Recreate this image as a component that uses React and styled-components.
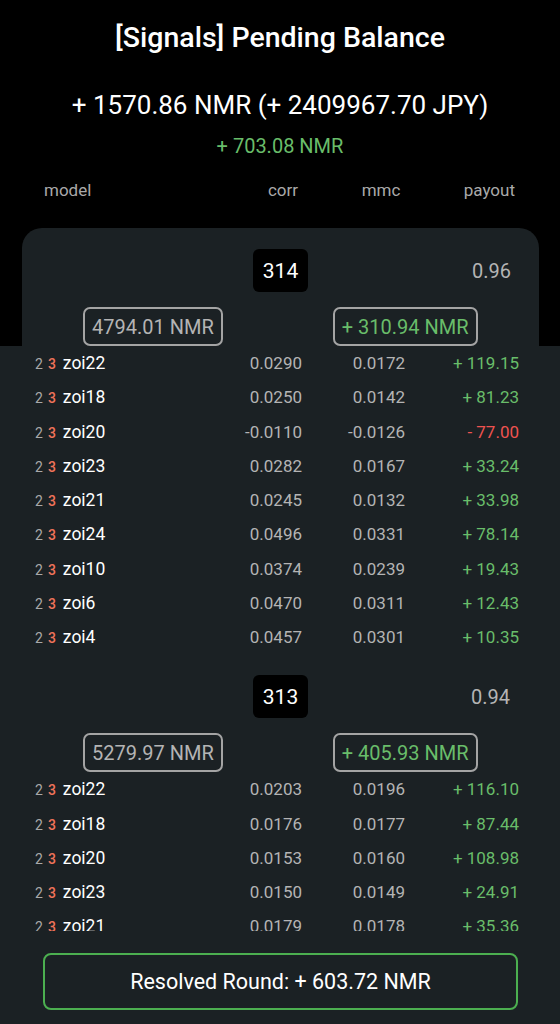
import React from "react";
import styled, { createGlobalStyle } from "styled-components";

const GlobalStyle = createGlobalStyle`
  html, body {
    margin: 0;
    padding: 0;
    background: #000;
    font-family: Roboto, "Noto Sans", "Liberation Sans", sans-serif;
  }
`;

const PANEL = "#1b2124";
const GREEN = "#69bd6a";
const RED = "#ef5350";
const MUTED = "#b4b4b4";

const Screen = styled.div`
  height: 1024px;
  display: flex;
  flex-direction: column;
  background: #000;
  color: #fff;
  overflow: hidden;
`;

const Title = styled.h1`
  margin: 20px 0 0;
  font-size: 28.5px;
  font-weight: 500;
  line-height: 36px;
  text-align: center;
`;

const Total = styled.div`
  margin-top: 31px;
  font-size: 26px;
  line-height: 36px;
  text-align: center;
`;

const Delta = styled.div`
  margin-top: 10px;
  font-size: 20px;
  line-height: 26px;
  color: ${GREEN};
  text-align: center;
`;

const ColumnHead = styled.div`
  margin-top: 20px;
  display: grid;
  grid-template-columns: 200px 78px 118px 1fr;
  padding: 0 45px 0 44px;
  font-size: 17px;
  line-height: 22px;
  color: #a9a9a9;

  & > span:nth-child(2),
  & > span:nth-child(3) {
    text-align: center;
  }
  & > span:nth-child(4) {
    text-align: right;
  }
`;

const Card = styled.div`
  margin: 27px 21px 0 22px;
  background: ${PANEL};
  border-radius: 20px 20px 0 0;
`;

const List = styled.div`
  flex: 1;
  min-height: 0;
  overflow: hidden;
  background: ${PANEL};
`;

const RoundHead = styled.div`
  padding: 21px ${(p) => 50 - p.$inset}px 0 ${(p) => 253 - p.$inset}px;
  display: flex;
  align-items: center;
`;

const RoundBadge = styled.div`
  width: 55px;
  height: 43px;
  border-radius: 6px;
  background: #000;
  color: #fff;
  font-size: 21px;
  display: flex;
  align-items: center;
  justify-content: center;
`;

const Ratio = styled.div`
  margin-left: auto;
  font-size: 20px;
  color: ${MUTED};
`;

const Totals = styled.div`
  display: flex;
  gap: 110px;
  margin-top: 15px;
  padding-left: ${(p) => 83 - p.$inset}px;
`;

const Pill = styled.div`
  height: 39px;
  box-sizing: border-box;
  padding: 0 7px;
  border: 2px solid #a4a4a4;
  border-radius: 7px;
  font-size: 20px;
  display: flex;
  align-items: center;
  color: ${(p) => (p.$positive ? GREEN : MUTED)};
`;

const Row = styled.div`
  height: 34.25px;
  display: grid;
  grid-template-columns: 187px 80px 103px 114px;
  padding: 0 41px 0 35px;
  align-items: center;
  font-size: 17px;
  color: ${MUTED};
`;

const Model = styled.div`
  display: flex;
  align-items: baseline;
`;

const Stage = styled.span`
  font-size: 14px;
  margin-right: ${(p) => (p.$last ? 7 : 5)}px;
  color: ${(p) => (p.$accent ? "#f0735a" : "#a9a9a9")};
  font-weight: ${(p) => (p.$accent ? 500 : 400)};
`;

const Name = styled.span`
  color: #fff;
  font-size: 17.5px;
`;

const Num = styled.div`
  text-align: right;
  color: ${(p) => (p.$tone === "up" ? GREEN : p.$tone === "down" ? RED : MUTED)};
`;

const Footer = styled.div`
  background: ${PANEL};
  padding: 22px 42px 14px 43px;
`;

const Resolved = styled.div`
  height: 57px;
  box-sizing: border-box;
  border: 2px solid #4caf50;
  border-radius: 8px;
  display: flex;
  align-items: center;
  justify-content: center;
  font-size: 21.5px;
  color: #fff;
`;

const rounds = [
  {
    id: 314,
    ratio: "0.96",
    stake: "4794.01 NMR",
    gain: "+ 310.94 NMR",
    models: [
      ["zoi22", "0.0290", "0.0172", 119.15],
      ["zoi18", "0.0250", "0.0142", 81.23],
      ["zoi20", "-0.0110", "-0.0126", -77.0],
      ["zoi23", "0.0282", "0.0167", 33.24],
      ["zoi21", "0.0245", "0.0132", 33.98],
      ["zoi24", "0.0496", "0.0331", 78.14],
      ["zoi10", "0.0374", "0.0239", 19.43],
      ["zoi6", "0.0470", "0.0311", 12.43],
      ["zoi4", "0.0457", "0.0301", 10.35],
    ],
  },
  {
    id: 313,
    ratio: "0.94",
    stake: "5279.97 NMR",
    gain: "+ 405.93 NMR",
    models: [
      ["zoi22", "0.0203", "0.0196", 116.1],
      ["zoi18", "0.0176", "0.0177", 87.44],
      ["zoi20", "0.0153", "0.0160", 108.98],
      ["zoi23", "0.0150", "0.0149", 24.91],
      ["zoi21", "0.0179", "0.0178", 35.36],
      ["zoi24", "0.0402", "0.0288", 70.12],
    ],
  },
];

const fmtPayout = (v) => (v < 0 ? `- ${Math.abs(v).toFixed(2)}` : `+ ${v.toFixed(2)}`);

const RoundHeader = ({ round, inset = 0 }) => (
  <>
    <RoundHead $inset={inset}>
      <RoundBadge>{round.id}</RoundBadge>
      <Ratio>{round.ratio}</Ratio>
    </RoundHead>
    <Totals $inset={inset}>
      <Pill>{round.stake}</Pill>
      <Pill $positive>{round.gain}</Pill>
    </Totals>
  </>
);

const ModelRows = ({ models }) =>
  models.map(([name, corr, mmc, payout]) => (
    <Row key={name}>
      <Model>
        <Stage>2</Stage>
        <Stage $accent $last>3</Stage>
        <Name>{name}</Name>
      </Model>
      <Num>{corr}</Num>
      <Num>{mmc}</Num>
      <Num $tone={payout < 0 ? "down" : "up"}>{fmtPayout(payout)}</Num>
    </Row>
  ));

export default function App() {
  const [current, ...older] = rounds;
  return (
    <Screen>
      <GlobalStyle />
      <Title>[Signals] Pending Balance</Title>
      <Total>+ 1570.86 NMR (+ 2409967.70 JPY)</Total>
      <Delta>+ 703.08 NMR</Delta>
      <ColumnHead>
        <span>model</span>
        <span>corr</span>
        <span>mmc</span>
        <span>payout</span>
      </ColumnHead>
      <Card>
        <RoundHeader round={current} inset={22} />
      </Card>
      <List>
        <ModelRows models={current.models} />
        {older.map((r) => (
          <React.Fragment key={r.id}>
            <RoundHeader round={r} />
            <ModelRows models={r.models} />
          </React.Fragment>
        ))}
      </List>
      <Footer>
        <Resolved>Resolved Round: + 603.72 NMR</Resolved>
      </Footer>
    </Screen>
  );
}
